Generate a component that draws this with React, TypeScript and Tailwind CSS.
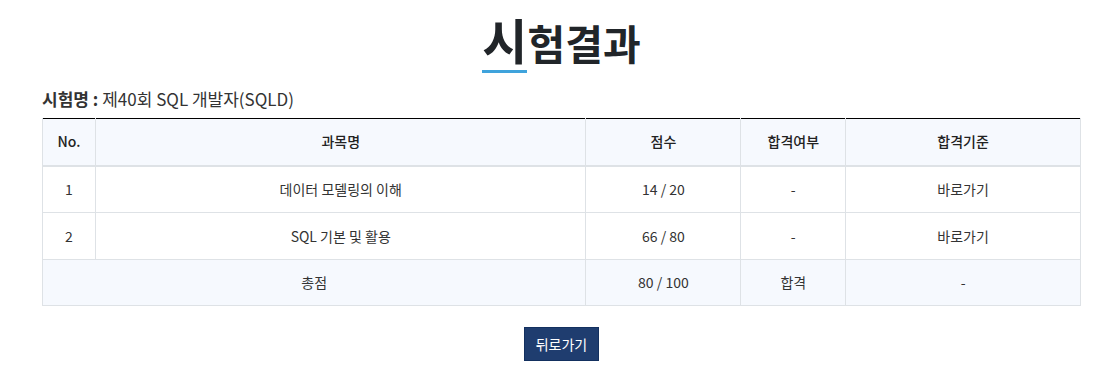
import React from "react";

const rows = [
  { no: "1", name: "데이터 모델링의 이해", score: "14 / 20", pass: "-", link: "바로가기" },
  { no: "2", name: "SQL 기본 및 활용", score: "66 / 80", pass: "-", link: "바로가기" },
];

const App = () => {
  return (
    <div className="min-h-[385px] bg-white font-['Noto_Sans_CJK_KR','Noto_Sans',sans-serif] text-[#333]">
      <div className="ml-[42px] w-[1039px]">
        <div className="flex justify-center pt-[11px]">
          <h2 className="flex items-end font-bold text-[#212529] leading-none">
            <span className="border-b-[3px] border-[#3fa3dc] pb-[3px] text-[49px] leading-[56px]">시</span>
            <span className="pb-[6px] text-[41px] leading-[50px]">험결과</span>
          </h2>
        </div>

        <p className="mt-[13px] text-[17px] leading-[26px]">
          <span className="font-bold">시험명 : </span>
          제40회 SQL 개발자(SQLD)
        </p>

        <table className="mt-[6px] w-full border-collapse border-t border-t-black text-[14px]">
          <colgroup>
            <col className="w-[53px]" />
            <col className="w-[491px]" />
            <col className="w-[155px]" />
            <col className="w-[105px]" />
            <col className="w-[235px]" />
          </colgroup>
          <thead>
            <tr className="h-[47px] border-b-2 border-[#dee2e6] bg-[#f6f9fe] text-[#222]">
              <th className="border-x border-[#dee2e6] font-medium">No.</th>
              <th className="border-x border-[#dee2e6] font-medium">과목명</th>
              <th className="border-x border-[#dee2e6] font-medium">점수</th>
              <th className="border-x border-[#dee2e6] font-medium">합격여부</th>
              <th className="border-x border-[#dee2e6] font-medium">합격기준</th>
            </tr>
          </thead>
          <tbody>
            {rows.map((r) => (
              <tr key={r.no} className="h-[47px] border-b border-[#dee2e6] text-center">
                <td className="border-x border-[#dee2e6]">{r.no}</td>
                <td className="border-x border-[#dee2e6]">{r.name}</td>
                <td className="border-x border-[#dee2e6]">{r.score}</td>
                <td className="border-x border-[#dee2e6]">{r.pass}</td>
                <td className="border-x border-[#dee2e6]">{r.link}</td>
              </tr>
            ))}
            <tr className="h-[46px] border-b border-[#dee2e6] bg-[#f6f9fe] text-center">
              <td colSpan={2} className="border-x border-[#dee2e6]">총점</td>
              <td className="border-x border-[#dee2e6]">80 / 100</td>
              <td className="border-x border-[#dee2e6]">합격</td>
              <td className="border-x border-[#dee2e6]">-</td>
            </tr>
          </tbody>
        </table>

        <div className="mt-[21px] flex justify-center">
          <button className="h-[34px] border border-[#13305f] bg-[#1f3d6f] px-[11px] text-[14px] text-white">
            뒤로가기
          </button>
        </div>
      </div>
    </div>
  );
};

export default App;
